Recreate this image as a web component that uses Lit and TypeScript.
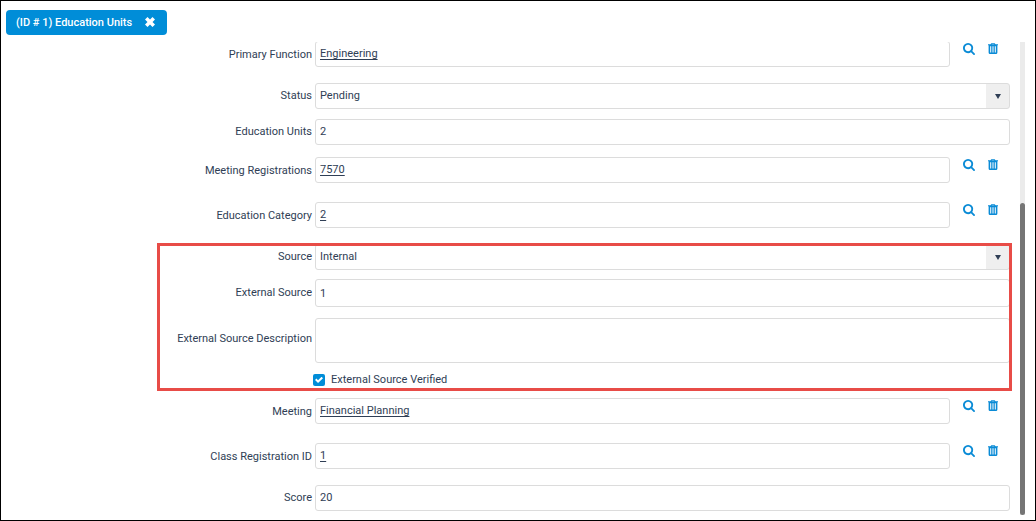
import { LitElement, html, css, svg } from "lit";
import { customElement, property } from "lit/decorators.js";

const searchIcon = html`<svg viewBox="0 0 1664 1664" width="12" height="12" aria-hidden="true">
  ${svg`<path fill="currentColor" d="M1152 704q0-185-131.500-316.500T704 256 387.500 387.500 256 704t131.500 316.500T704 1152t316.500-131.500T1152 704zm512 832q0 52-38 90t-90 38q-54 0-90-38l-343-342q-179 124-399 124-143 0-273.500-55.500t-225-150-150-225T0 704t55.500-273.500 150-225 225-150T704 0t273.500 55.500 225 150 150 225T1408 704q0 220-124 399l343 343q37 37 37 90z"/>`}
</svg>`;

const trashIcon = html`<svg viewBox="0 0 10 11" width="10" height="11" aria-hidden="true">
  ${svg`<path fill="currentColor" fill-rule="evenodd" d="M0 1.300h2.500L3.100.4Q3.400 0 4 0h2q.6 0 .9.400l.6.900H10v1H9.400V9.500Q9.400 11 8 11H2Q.6 11 .6 9.500V2.300H0zM3.700 1.300h2.600L5.900.8H4.100zM2.200 3.300v6.200h1V3.300zM4.500 3.300v6.200h1V3.300zM6.800 3.300v6.200h1V3.300z"/>`}
</svg>`;

const shared = css`
  *, *::before, *::after { box-sizing: border-box; }
  .row {
    display: grid;
    grid-template-columns: 311px minmax(0, 1fr);
    column-gap: 3px;
    align-items: center;
  }
  .label { text-align: right; }
  .box {
    width: 100%;
    height: 26px;
    margin: 0;
    padding: 0 4px;
    border: 1px solid #dcdcdc;
    border-radius: 3px;
    background: #fff;
    color: inherit;
    font: inherit;
    outline: none;
  }
`;

@customElement("lookup-field")
export class LookupField extends LitElement {
  @property() label = "";
  @property() value = "";

  static styles = [
    shared,
    css`
      :host { display: block; }
      .label { padding-top: 2px; }
      .control { display: flex; }
      .box { flex: 1; min-width: 0; display: flex; align-items: center; }
      a { color: inherit; text-decoration: underline; text-underline-offset: 2px; }
      .actions { display: flex; align-items: flex-start; gap: 13px; padding: 2px 12px 0 13px; }
      button {
        display: block;
        padding: 0;
        border: 0;
        background: none;
        color: #0a8bd6;
        line-height: 0;
        cursor: pointer;
      }
      svg { display: block; }
    `,
  ];

  render() {
    return html`
      <div class="row">
        <span class="label" id="label">${this.label}</span>
        <div class="control" role="group" aria-labelledby="label">
          <div class="box"><a href="#">${this.value}</a></div>
          <div class="actions">
            <button type="button" aria-label="Search">${searchIcon}</button>
            <button type="button" aria-label="Delete">${trashIcon}</button>
          </div>
        </div>
      </div>
    `;
  }
}

@customElement("app-root")
export class AppRoot extends LitElement {
  static styles = [
    shared,
    css`
      :host {
        box-sizing: border-box;
        display: flex;
        flex-direction: column;
        min-height: 100vh;
        border: 1px solid #000;
        background: #fff;
        color: #2f3e55;
        font: 11px/14px Roboto, sans-serif;
      }
      .tabs { display: flex; padding: 9px 5px 7px; }
      .tab {
        display: flex;
        align-items: center;
        gap: 13px;
        height: 25px;
        padding: 0 12px 0 10px;
        border-radius: 4px;
        background: #008dd8;
        color: #fff;
        font-weight: 500;
      }
      .close {
        display: block;
        padding: 0 0 2px;
        border: 0;
        background: none;
        color: inherit;
        line-height: 0;
      }
      .close svg { display: block; }
      .panel { flex: 1; display: flex; gap: 10px; padding-right: 10px; overflow: hidden; }
      form { flex: 1; min-width: 0; margin-top: -1px; padding-bottom: 9px; }
      lookup-field { margin-bottom: 16px; }
      lookup-field + lookup-field { margin-top: 19px; }
      .select-row { margin-bottom: 10px; }
      .text-row { margin-bottom: 12px; }
      .last { margin-bottom: 0; }
      .text-row .box { padding-bottom: 2px; }
      .select { position: relative; }
      select.box {
        display: block;
        appearance: none;
        background: linear-gradient(#efefef, #efefef) right / 23px 100% no-repeat #fff;
      }
      .arrow { position: absolute; right: 9px; top: 11px; pointer-events: none; }
      .source { position: relative; margin-bottom: 12px; }
      .source .select-row { margin-bottom: 9px; }
      .source .text-row { margin-bottom: 11px; }
      .source::after {
        content: "";
        position: absolute;
        inset: -1px -2px -5px 156px;
        border: 3px solid #e84c47;
        pointer-events: none;
      }
      .text-row .tall { height: 28px; padding-bottom: 0; }
      textarea.box { display: block; height: 45px; resize: none; }
      .area-label { padding-bottom: 4px; }
      .check { display: flex; align-items: center; gap: 6px; height: 12px; padding-left: 312px; }
      .check input {
        appearance: none;
        width: 12px;
        height: 12px;
        margin: 0;
        border-radius: 2px;
        background: #008dd8;
        display: grid;
        place-items: center;
      }
      .check input:checked::before {
        content: "";
        width: 8px;
        height: 7px;
        background: #fff;
        clip-path: polygon(0 50%, 18% 30%, 38% 54%, 82% 4%, 100% 24%, 38% 94%);
      }
      .track {
        display: flex;
        flex-direction: column;
        justify-content: flex-end;
        width: 5px;
        margin-bottom: 5px;
        background: #ebebeb;
      }
      .thumb { height: 66%; border-radius: 3px; background: #757575; }
    `,
  ];

  private select(id: string, label: string, value: string) {
    return html`
      <div class="row select-row">
        <label class="label" for=${id}>${label}</label>
        <div class="select">
          <select class="box" id=${id}><option>${value}</option></select>
          <svg class="arrow" width="6" height="5" viewBox="0 0 6 5" aria-hidden="true">
            <path fill="#2f3e55" d="M0 0h6L3 5z" />
          </svg>
        </div>
      </div>
    `;
  }

  private text(id: string, label: string, value: string, row = "", box = "") {
    return html`
      <div class="row text-row ${row}">
        <label class="label" for=${id}>${label}</label>
        <input class="box ${box}" id=${id} type="text" .value=${value} />
      </div>
    `;
  }

  render() {
    return html`
      <header class="tabs">
        <div class="tab">
          <span>(ID # 1) Education Units</span>
          <button class="close" type="button" aria-label="Close">
            <svg width="10" height="10" viewBox="0 0 10 10" aria-hidden="true">
              <path fill="currentColor" d="M2.500 0 5 2.500 7.500 0 10 2.500 7.500 5 10 7.500 7.500 10 5 7.500 2.500 10 0 7.500 2.500 5 0 2.500z" />
            </svg>
          </button>
        </div>
      </header>
      <main class="panel">
        <form>
          <lookup-field label="Primary Function" value="Engineering"></lookup-field>
          ${this.select("status", "Status", "Pending")}
          ${this.text("units", "Education Units", "2")}
          <lookup-field label="Meeting Registrations" value="7570"></lookup-field>
          <lookup-field label="Education Category" value="2"></lookup-field>
          <section class="source">
            ${this.select("source", "Source", "Internal")}
            ${this.text("external", "External Source", "1", "", "tall")}
            <div class="row text-row">
              <label class="label area-label" for="description">External Source Description</label>
              <textarea class="box" id="description"></textarea>
            </div>
            <div class="check">
              <input id="verified" type="checkbox" checked />
              <label for="verified">External Source Verified</label>
            </div>
          </section>
          <lookup-field label="Meeting" value="Financial Planning"></lookup-field>
          <lookup-field label="Class Registration ID" value="1"></lookup-field>
          ${this.text("score", "Score", "20", "last")}
        </form>
        <div class="track"><div class="thumb"></div></div>
      </main>
    `;
  }
}
